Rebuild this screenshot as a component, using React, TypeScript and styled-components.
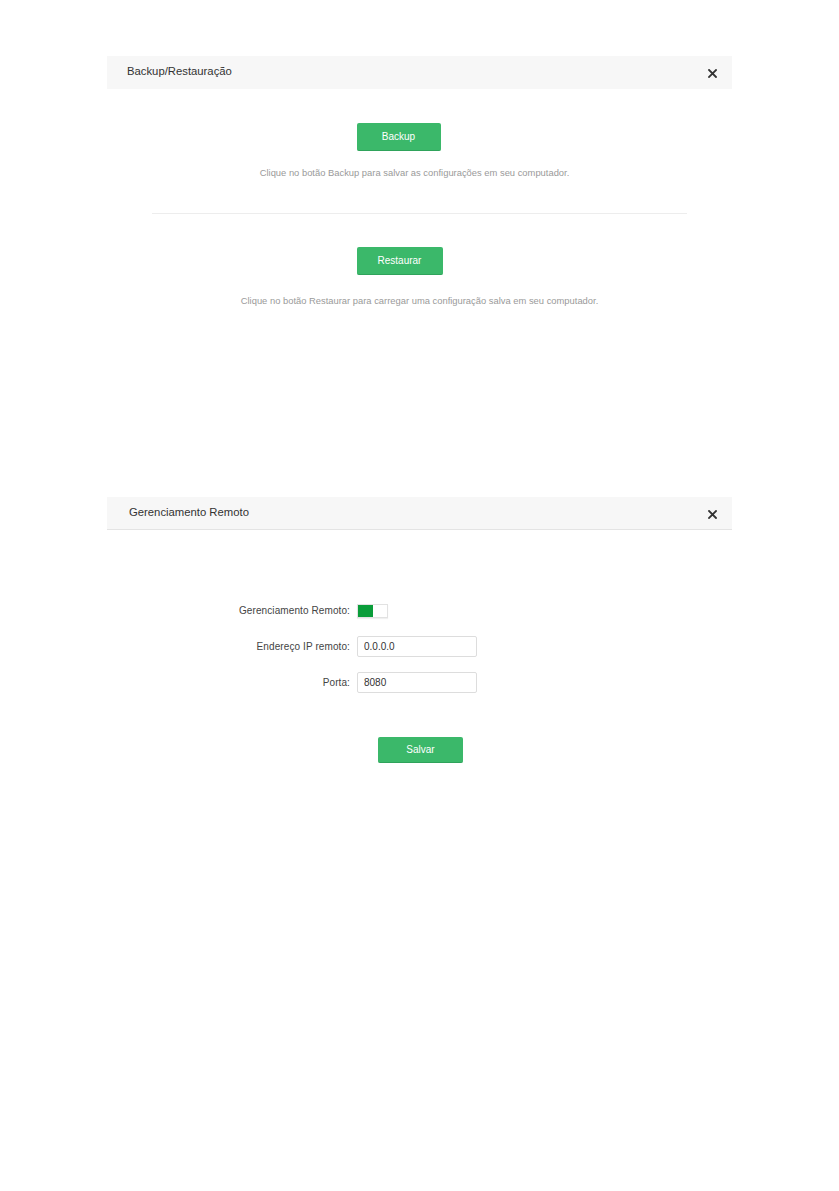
import React from 'react'
import styled, { createGlobalStyle } from 'styled-components'

const GlobalStyle = createGlobalStyle`
	body {
		margin: 0;
		background: #ffffff;
		font-family: "Liberation Sans", Arial, sans-serif;
		color: #333333;
	}
`;

const CloseIcon = () => (
	<svg width="9" height="9" viewBox="0 0 9 9">
		<path d="M1 1 L8 8 M8 1 L1 8" stroke="#333" strokeWidth="1.8" strokeLinecap="square" />
	</svg>
);

interface PanelHeaderProps {
	title: string;
	indent: number;
	bordered?: boolean;
}
const PanelHeader = ({title, indent, bordered}: PanelHeaderProps) => (
	<Header $bordered={bordered}>
		<Title $indent={indent}>{title}</Title>
		<Close><CloseIcon /></Close>
	</Header>
);

const App = () => {
	return (
		<>
			<GlobalStyle />
			<Page>
				<Panel>
					<PanelHeader title="Backup/Restauração" indent={20} />
					<Section>
						<GreenButton $width={84} $offset={-42}>Backup</GreenButton>
						<Hint $gap={16} $shift={-10}>Clique no botão Backup para salvar as configurações em seu computador.</Hint>
					</Section>
					<Divider />
					<Section $top={33}>
						<GreenButton $width={86} $offset={-40}>Restaurar</GreenButton>
						<Hint $gap={20} $shift={0}>Clique no botão Restaurar para carregar uma configuração salva em seu computador.</Hint>
					</Section>
				</Panel>

				<Panel $top={191}>
					<PanelHeader title="Gerenciamento Remoto" indent={22} bordered />
					<Form>
						<Label>Gerenciamento Remoto:</Label>
						<Toggle>
							<ToggleOn />
						</Toggle>
						<Label>Endereço IP remoto:</Label>
						<Input defaultValue="0.0.0.0" />
						<Label>Porta:</Label>
						<Input defaultValue="8080" />
					</Form>
					<Footer>
						<GreenButton $width={85} $height={26} $offset={2}>Salvar</GreenButton>
					</Footer>
				</Panel>
			</Page>
		</>
	);
}

const Page = styled.div`
	padding: 56px 0 300px 107px;
	width: 625px;
`;

const Panel = styled.section<{ $top?: number }>`
	margin-top: ${p => p.$top ?? 0}px;
	display: flex;
	flex-direction: column;
`;

const Header = styled.div<{ $bordered?: boolean }>`
	display: flex;
	align-items: center;
	justify-content: space-between;
	height: ${p => p.$bordered ? 32 : 33}px;
	background: #f7f7f7;
	border-bottom: ${p => p.$bordered ? '1px solid #e4e4e4' : 'none'};
	padding-right: 15px;
`;

const Title = styled.div<{ $indent: number }>`
	padding-left: ${p => p.$indent}px;
	margin-top: -3px;
	font-size: 11.3px;
	color: #333;
`;

const Close = styled.div`
	display: flex;
	align-items: center;
	margin-top: 2px;
`;

const Section = styled.div<{ $top?: number }>`
	display: flex;
	flex-direction: column;
	align-items: center;
	padding-top: ${p => p.$top ?? 34}px;
`;

const GreenButton = styled.button<{ $width: number; $height?: number; $offset: number }>`
	width: ${p => p.$width}px;
	height: ${p => p.$height ?? 28}px;
	margin-left: ${p => p.$offset}px;
	background: #3bb86a;
	border: none;
	border-bottom: 1px solid #2fa35b;
	border-radius: 2px;
	color: #ffffff;
	font-family: "Liberation Sans", Arial, sans-serif;
	font-size: 10px;
	padding: 0;
`;

const Hint = styled.p<{ $gap: number; $shift: number }>`
	margin: ${p => p.$gap}px 0 0 ${p => p.$shift}px;
	font-size: 9.4px;
	color: #9a9a9a;
	line-height: 11px;
`;

const Divider = styled.hr`
	margin: 35px 45px 0 45px;
	border: none;
	border-top: 1px solid #ededed;
`;

const Form = styled.div`
	display: grid;
	grid-template-columns: 243px 120px;
	grid-auto-rows: 21px;
	column-gap: 7px;
	row-gap: 15px;
	align-items: center;
	padding-top: 70px;
`;

const Label = styled.div`
	text-align: right;
	font-size: 10px;
	color: #444;
	letter-spacing: 0.1px;
`;

const Toggle = styled.div`
	display: flex;
	width: 31px;
	height: 14px;
	border: 1px solid #e2e2e2;
	box-sizing: border-box;
	background: #ffffff;
	box-shadow: 0 1px 1px rgba(0, 0, 0, 0.06);
`;

const ToggleOn = styled.div`
	width: 15px;
	height: 100%;
	background: #0a9d3a;
`;

const Input = styled.input`
	box-sizing: border-box;
	width: 120px;
	height: 21px;
	border: 1px solid #dddddd;
	border-radius: 2px;
	padding: 0 6px;
	font-family: "Liberation Sans", Arial, sans-serif;
	font-size: 10px;
	color: #333;
	outline: none;
`;

const Footer = styled.div`
	display: flex;
	justify-content: center;
	padding-top: 44px;
`;

export default App
